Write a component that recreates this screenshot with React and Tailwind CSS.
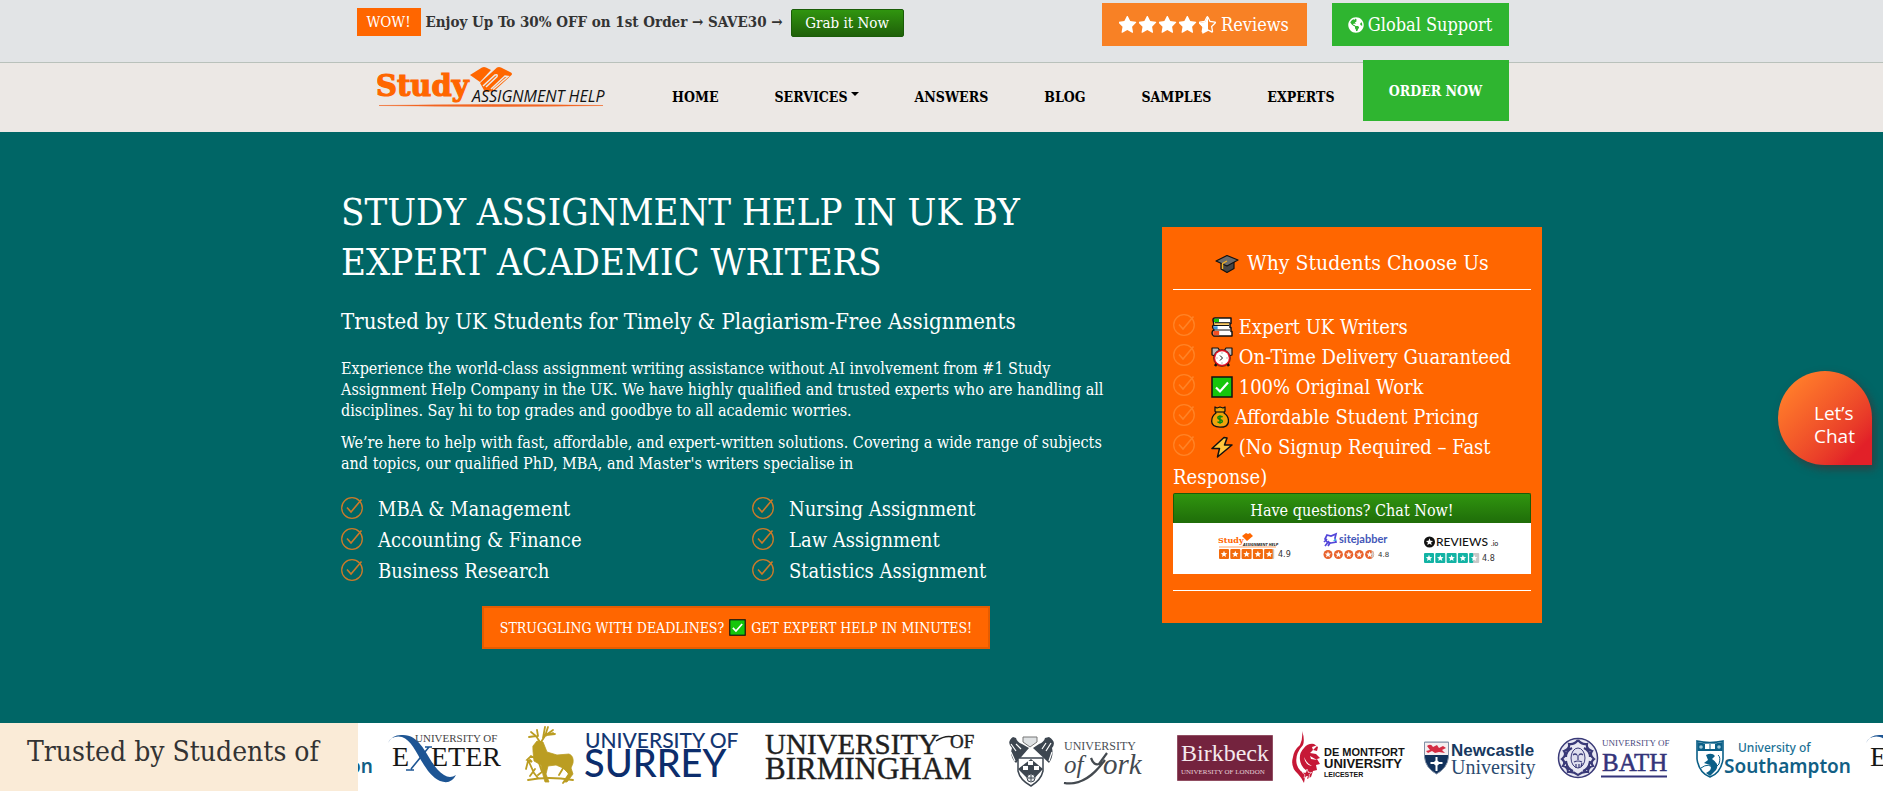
import React from "react";
import { FaGlobeAmericas } from "react-icons/fa";

const STAR_PATH =
  "M1664 647q0 22-26 48l-363 354 86 500q1 7 1 20 0 21-10.5 35.5t-30.5 14.5q-19 0-40-12l-449-236-449 236q-22 12-40 12-21 0-31.5-14.5t-10.5-35.5q0-6 2-20l86-500-364-354q-25-27-25-48 0-37 56-46l502-73 225-455q19-41 49-41t49 41l225 455 502 73q56 9 56 46z";
const STAR_POINTS = "0,-5 1.3,-1.6 4.8,-1.5 2.1,0.7 3,4.1 0,2.2 -3,4.1 -2.1,0.7 -4.8,-1.5 -1.3,-1.6";

function Star({ half = false }) {
  return (
    <svg viewBox="60 60 1672 1672" className="size-[18px]" aria-hidden="true">
      {half ? (
        <>
          <path d={STAR_PATH} fill="none" stroke="#fff" strokeWidth="130" transform="translate(90 90) scale(.9)" />
          <path d="M896 128q-30 0-49 41L622 624l-502 73q-56 9-56 46 0 21 25 48l364 354-86 500q0 60 42 56 18 0 40-12l447-235z" fill="#fff" />
        </>
      ) : (
        <path d={STAR_PATH} fill="#fff" />
      )}
    </svg>
  );
}

function BrandMark({ className }) {
  return (
    <svg viewBox="0 0 232 44" className={className} role="img" aria-label="Study Assignment Help">
      <text x="-1" y="31" fontFamily="'DejaVu Serif'" fontWeight="700" fontSize="29" fill="#ff6600" stroke="#ff6600" strokeWidth="1.2">Study</text>
      <path d="M93 10 105 2.500q2-1 4 0l5 2.500-11 12z" fill="#ff6600" />
      <path d="M103 18 120 2.500q2-1 4 0l10 5q2 1.500 0 3L117 26l-9 1z" fill="#ff6600" />
      <path d="m106 21 12-11q3-1 2 1.500L109 22M114 24l14-13 3 .500-15 13" fill="none" stroke="#ece8e5" strokeWidth="1.500" />
      <text x="95" y="37" fontFamily="'Open Sans',sans-serif" fontStyle="italic" fontSize="16" fontWeight="500" fill="#111">ASSIGNMENT HELP</text>
      <path d="M2 40.500q113-2 224 0-111 2-224 0" fill="#f26522" stroke="#f26522" strokeWidth=".5" />
    </svg>
  );
}

function CheckCircle({ className, color = "#cc7a29" }) {
  return (
    <svg viewBox="0 0 22 22" className={className} fill="none" stroke={color} strokeWidth="1.3" aria-hidden="true">
      <circle cx="11" cy="11" r="10.300" />
      <path d="m6 10.500 4 4.500L20.500 2.500" strokeWidth="1.600" />
    </svg>
  );
}

const emojiClass = "inline-block h-[22px] w-[22px] align-[-4px]";

const Cap = ({ className }) => (
  <svg viewBox="0 0 24 20" className={className} stroke="#111" strokeWidth="1.200" strokeLinejoin="round" aria-hidden="true">
    <path d="M6 8v7l6 3.500 7-4V8z" fill="#454545" />
    <path d="M1 7 12 1.500 23 6l-11 6z" fill="#6b6b6b" />
    <path d="m12 7-4.500 2.500V15" fill="none" stroke="#f5b325" strokeWidth="1.400" />
  </svg>
);
const Books = () => (
  <svg viewBox="0 0 22 22" className={emojiClass} strokeLinejoin="round" aria-hidden="true">
    <path d="M2 4q0-2 2-2h16v5.500h-1v4h1v4h1V20H3q-2-1-2-3t2-3l-1-2q-1-2 1-3.500z" fill="#fff" stroke="#111" strokeWidth="1.500" />
    <path d="M3 2.800h5v3.400H3z" fill="#16c60c" />
    <path d="M3 7.200h15v1.500H3z" fill="#f7b82e" />
    <path d="M2.600 10.300h4v3h-4z" fill="#3a96dd" />
    <path d="M2.200 15h6v4.300h-6z" fill="#f25022" />
    <path d="M4 6.700h15M3 9.500h15M3 14h16" stroke="#111" strokeWidth="1" />
  </svg>
);
const Clock = () => (
  <svg viewBox="0 0 22 22" className={emojiClass} aria-hidden="true">
    <path d="m4 20 3-4m11 4-3-4" stroke="#111" strokeWidth="2.600" />
    <path d="M1 2h6l2 3-5 5-3-1zM21 2h-6l-2 3 5 5 3-1z" fill="#bbb" stroke="#111" strokeWidth="1.200" strokeLinejoin="round" />
    <circle cx="11" cy="12" r="8.500" fill="#e81224" stroke="#111" strokeWidth=".5" />
    <circle cx="11" cy="12" r="6.800" fill="#fff" />
    <path d="m9 9.500 2.500 2.500L9 14.500" fill="none" stroke="#111" strokeWidth="1" />
    <path d="M11 6.500v1m0 9v1M5.500 12h1m9 0h1" stroke="#777" />
  </svg>
);
const CheckBox = ({ className = emojiClass }) => (
  <svg viewBox="0 0 22 22" className={className} aria-hidden="true">
    <rect x="1" y="1" width="20" height="20" fill="#16c60c" stroke="#111" strokeWidth="1.500" />
    <path d="m5 11.500 4 4L17 6.500" fill="none" stroke="#fff" strokeWidth="2.200" />
  </svg>
);
const Money = () => (
  <svg viewBox="0 0 18 22" className="inline-block h-[22px] w-[18px] align-[-4px]" aria-hidden="true">
    <path d="m4 1 2 1 3-1 3 1 2-1v4l-1 2c3 2 4.500 5 4.500 8 0 4-3 6.200-8.500 6.200S.500 19 .700 15c0-3 1.300-6 4.300-8L4 5z" fill="#f0a30a" stroke="#111" strokeWidth="1.300" strokeLinejoin="round" />
    <path d="M5 6h8" stroke="#111" strokeWidth="1.200" />
    <path d="M11.500 11.200c-1-1.400-4.800-1.200-4.600.8.100 1.800 4.500 1 4.500 3.200 0 1.800-3.700 2-4.900.4M9 9.300v8.400" fill="none" stroke="#0a8a0a" strokeWidth="1.500" />
  </svg>
);
const Bolt = () => (
  <svg viewBox="0 0 22 22" className={emojiClass} aria-hidden="true">
    <path d="m13 1.500-12 11h7.500L6.500 21 21 9h-7.500l2.500-7z" fill="#ffc83d" stroke="#111" strokeWidth="1.500" strokeLinejoin="round" />
  </svg>
);

const NAV = ["HOME", "SERVICES", "ANSWERS", "BLOG", "SAMPLES", "EXPERTS"];

const SUBJECTS = [
  ["MBA & Management", "Nursing Assignment"],
  ["Accounting & Finance", "Law Assignment"],
  ["Business Research", "Statistics Assignment"],
];

const REASONS = [
  { Icon: Books, text: "Expert UK Writers" },
  { Icon: Clock, text: "On-Time Delivery Guaranteed" },
  { Icon: CheckBox, text: "100% Original Work" },
  { Icon: Money, text: "Affordable Student Pricing" },
  { Icon: Bolt, text: "(No Signup Required – Fast Response)" },
];

function SquareStars({ y, color, partial }) {
  return [0, 1, 2, 3, 4].map((i) => (
    <g key={i} transform={`translate(${i * 11.300} ${y})`}>
      <rect width="10" height="10" rx="1" fill={i === 4 ? "#c8c8c8" : color} />
      {i === 4 && <rect width={partial} height="10" rx="1" fill={color} />}
      <polygon points={STAR_POINTS} transform="translate(5 5.200) scale(.68)" fill="#fff" />
    </g>
  ));
}

function Ratings() {
  return (
    <div className="flex h-[51px] items-start gap-[27px] bg-white pl-[45px] pt-2">
      <svg viewBox="0 0 78 36" className="h-9 w-[78px] shrink-0" role="img" aria-label="Study Assignment Help 4.9">
        <text x="0" y="12" fontFamily="'DejaVu Serif'" fontWeight="700" fontSize="8" fill="#f60">Study</text>
        <path d="m24 5 4-3 2 1 2-1 3 3-6 5z" fill="#f60" />
        <text x="25" y="15" fontFamily="'Open Sans',sans-serif" fontStyle="italic" fontWeight="700" fontSize="4" fill="#111">ASSIGNMENT HELP</text>
        <path d="M1 16h57" stroke="#f60" strokeWidth=".6" />
        <g transform="translate(1 0)"><SquareStars y={18} color="#f26a0c" partial={8.5} /></g>
        <text x="60" y="26" fontFamily="'DejaVu Sans'" fontSize="8" fill="#333">4.9</text>
      </svg>
      <svg viewBox="0 0 74 36" className="h-9 w-[74px] shrink-0" role="img" aria-label="sitejabber 4.8">
        <path d="m4 4 4 1 5-2-1 4 1 4-5 1-4-1-2-3zM1 11l3-3m-2 7 4-5m-1 5 2-3" fill="none" stroke="#5346d9" strokeWidth="1.700" />
        <path d="M10 10h3V7z" fill="#38b6e6" />
        <text x="16" y="12" fontFamily="'Lato',sans-serif" fontWeight="700" fontSize="11" fill="#4457b8">sitejabber</text>
        {[0, 1, 2, 3, 4].map((i) => (
          <g key={i} transform={`translate(${5 + i * 10.400} 23.500)`}>
            <circle r="4.500" fill="#e8622c" />
            {i === 4 && <path d="M2-4a4.500 4.500 0 0 1 0 8z" fill="#ccc" />}
            <polygon points={STAR_POINTS} transform="scale(.65)" fill="#fff" />
          </g>
        ))}
        <text x="55" y="26" fontFamily="'DejaVu Sans'" fontSize="7" fill="#333">4.8</text>
      </svg>
      <svg viewBox="0 0 80 36" className="h-9 w-20 shrink-0" role="img" aria-label="Reviews.io 4.8">
        <circle cx="5.500" cy="11" r="5.500" fill="#111" />
        <polygon points={STAR_POINTS} transform="translate(5.500 11) scale(.75)" fill="#fff" />
        <text x="12" y="15" fontFamily="'Lato',sans-serif" fontWeight="500" fontSize="12" fill="#111">REVIEWS</text>
        <text x="67" y="15" fontFamily="'Lato',sans-serif" fontSize="7" fill="#111">.io</text>
        <SquareStars y={22} color="#12b3a4" partial={4} />
        <text x="58" y="30" fontFamily="'DejaVu Sans'" fontSize="8" fill="#333">4.8</text>
      </svg>
    </div>
  );
}

const serif = "'Liberation Serif',serif";
const sans = "'Liberation Sans',sans-serif";
const logoClass = "h-[68px] shrink-0";

const Southampton = () => (
  <svg viewBox="0 0 176 68" className={`${logoClass} w-[176px]`} role="img" aria-label="University of Southampton">
    <path d="M15 18q13 3 26 0v18q-2 14-13 18-11-4-13-18z" fill="#fff" stroke="#0b5f87" strokeWidth="1.600" />
    <path d="M15.500 19q12.500 3 25 0v9h-25z" fill="#0b5f87" />
    <path d="M23 21h4.500v5H23zM28.500 21H33v5h-4.500z" fill="#fff" />
    <circle cx="19" cy="24" r="1.800" fill="#9cc6d8" /><circle cx="37" cy="24" r="1.800" fill="#9cc6d8" />
    <path d="M24 32q6-3 9 1l-3 3q8 5 4 11l-6 6-4-3q7-3 4-8l-6-2 4-3z" fill="#0b5f87" />
    <path d="M36 32q3 2 1 9l-4 4M19 45q8-6 13 1" fill="none" stroke="#0b5f87" />
    <text x="56" y="29" fontFamily="'Noto Sans',sans-serif" fontWeight="500" fontSize="12" fill="#1b7195">University of</text>
    <text x="42" y="50" fontFamily="'Noto Sans',sans-serif" fontWeight="600" fontSize="19" fill="#125f85">Southampton</text>
  </svg>
);
const Exeter = () => (
  <svg viewBox="0 0 135 68" className={`${logoClass} w-[135px]`} role="img" aria-label="University of Exeter">
    <text x="35" y="19" fontFamily={serif} fontSize="11" fill="#444">UNIVERSITY OF</text>
    <text x="12" y="43" fontFamily={serif} fontSize="28" fill="#161616">E</text>
    <text x="51" y="43" fontFamily={serif} fontSize="28" fill="#161616">ETER</text>
    <path d="M8 20q4-8 14-6c14 4 20 36 38 44q11 4 16-6-6 4-12 0C48 43 44 10 21 12q-9 0-13 8" fill="#1d5594" />
    <path d="M52 24h-7m4 0L31 46m-5 1h8" fill="none" stroke="#1d5594" strokeWidth="1.600" />
  </svg>
);
const Surrey = () => (
  <svg viewBox="0 0 238 68" className={`${logoClass} w-[238px]`} role="img" aria-label="University of Surrey">
    <g fill="#bb9d22" stroke="#bb9d22" strokeLinecap="round">
      <path d="m18 23 4-5 6 1 4 10 10 3 12-1q5 2 4 9l-2 5 2 6-6 8h-3l5-8-6-6-7-3-8 1-2 8 3 8h-4l-2-7-2-10-7-4-1-10z" strokeWidth=".8" />
      <path d="m25 19-4-6-5-4m5 4-7 1m9-1-1-6m4 12 4-6 8-3m-8 3 3-9m-5 11 2-11m1 8 7-5m-7 5 9-1M25 38l-9-5-4 4 5 2-2-2M13 38l-2 8m13-6 3 9-4 3m-9-13 5 11 4 5m-3-9-5 7m35-11-6 10m6-9 4 8-6 9M13 57q20-4 45 0" fill="none" strokeWidth="1.800" />
    </g>
    <text x="70" y="25" fontFamily="'Lato',sans-serif" fontSize="21" fontWeight="500" fill="#143772">UNIVERSITY OF</text>
    <text x="69" y="54" fontFamily="'Lato',sans-serif" fontSize="38" fontWeight="500" fill="#0c2d6c">SURREY</text>
  </svg>
);
const Birmingham = () => (
  <svg viewBox="0 0 240 68" className={`${logoClass} w-[240px]`} role="img" aria-label="University of Birmingham" fontFamily={serif} fill="#1f1f1f" stroke="#1f1f1f" strokeWidth=".4">
    <text x="12" y="31" fontSize="29">UNIVERSITY</text>
    <path d="M183 18q9-6 17-4" fill="none" strokeWidth="1.500" />
    <text x="197" y="25" fontSize="19">OF</text>
    <text x="12" y="56" fontSize="31">BIRMINGHAM</text>
  </svg>
);
const York = () => (
  <svg viewBox="0 0 167 68" className={`${logoClass} w-[167px]`} role="img" aria-label="University of York">
    <path d="M20 14q-7 5-1 11-3 8 4 15l13-15-7-4q-5-2-6-6zM56 14q8 5 3 11 2 8-3 15L40 25l6-4q5-2 6-6z" fill="#3d4650" />
    <path d="M23 28 18 21m10 5-5-5m30 7 5-8m-9 6 4-6M22 38l-4-9m38 9 3-9" stroke="#fff" strokeWidth="1.200" />
    <path d="M30 14h14v5l-7 5-7-5z" fill="#dfe2e4" stroke="#777" />
    <path d="M25 35h25v13q-2 9-12 15-11-6-13-15z" fill="#fff" stroke="#3d4650" strokeWidth="1.500" />
    <path d="m25 46 13-10 12 10-12 13z" fill="#3d4650" />
    <path d="M30 43h5v4h-5zM41 43h5v4h-5zM35 38h5v4h-5z" fill="#fff" />
    <circle cx="38" cy="55" r="4" fill="#e5e7e9" stroke="#3d4650" /><path d="M38 52v6m-3-3h6" stroke="#3d4650" />
    <text x="71" y="27" fontFamily={serif} fontSize="12" fill="#4a4f55">UNIVERSITY</text>
    <text x="71" y="50" fontFamily={serif} fontStyle="italic" fontSize="25" fill="#444a50">of</text>
    <path d="M98 35q3 8 8 6l8-11M110 39q-16 24-39 21 21 4 41-23" fill="none" stroke="#444a50" strokeWidth="2.200" />
    <text x="110" y="51" fontFamily={serif} fontStyle="italic" fontSize="29" fill="#444a50">ork</text>
  </svg>
);
const Birkbeck = () => (
  <svg viewBox="0 0 122 68" className={`${logoClass} w-[122px]`} role="img" aria-label="Birkbeck University of London">
    <path d="M17.500 12.500h95v45h-95z" fill="#74233e" stroke="#914e62" />
    <text x="21" y="38" fontFamily={serif} fontSize="24" fill="#f4e9ed">Birkbeck</text>
    <text x="21" y="51" fontFamily={serif} fontSize="7" fill="#e6d0d7">UNIVERSITY OF LONDON</text>
  </svg>
);
const DeMontfort = () => (
  <svg viewBox="0 0 131 68" className={`${logoClass} w-[131px]`} role="img" aria-label="De Montfort University Leicester">
    <g fill="#c61836">
      <path d="M20 8q3 8 1 14-9 10-6 20 2 7 10 9-3 4-3 9-3-6-6-9Q8 44 11 34q1-7 7-12 3-6 2-14" />
      <path d="M22 25q4-5 10-4l4 3-1 4-4-1-3 3 6 1 4 4-3 1 3 5-4 1 1 5-4 1-2 6-4 2 2-7q-8-4-9-12-1-7 4-12" />
      <path d="m30 24 6-2-5 5zM22 34q3 7 8 9-7-1-8-9m6-1 7 4-6-1z" fill="#fff" />
      <polygon points={STAR_POINTS} transform="translate(25 51)" stroke="#fff" strokeWidth=".6" />
    </g>
    <g fontFamily={sans} fontWeight="700" fill="#141414">
      <text x="42" y="33" fontSize="11">DE MONTFORT</text>
      <text x="42" y="45" fontSize="13">UNIVERSITY</text>
      <text x="42" y="54" fontSize="7">LEICESTER</text>
    </g>
  </svg>
);
const Newcastle = () => (
  <svg viewBox="0 0 135 68" className={`${logoClass} w-[135px]`} role="img" aria-label="Newcastle University">
    <path d="M11.500 19h24v15q-1 11-12 17-11-6-12-17z" fill="#12325c" stroke="#8391a6" />
    <path d="M12 19.500h23V32H12z" fill="#f5eef0" />
    <path d="M14 23q4-3 6 1l4-2 2 3 4-2 3 2-4 2 3 3-6-1-4 1-3-2-4 2-2-2 4-1z" fill="#d42c43" />
    <path d="M23.500 34v14m-6-8h12" stroke="#fff" strokeWidth="2" /><circle cx="23.500" cy="40" r="2.500" fill="#fff" />
    <text x="38" y="33" fontFamily={sans} fontWeight="700" fontSize="17" fill="#173960">Newcastle</text>
    <text x="38" y="51" fontFamily={serif} fontSize="20" fill="#294a70">University</text>
  </svg>
);
const Bath = () => (
  <svg viewBox="0 0 134 68" className={`${logoClass} w-[134px]`} role="img" aria-label="University of Bath">
    <circle cx="30" cy="35" r="19.500" fill="#e9e9f3" stroke="#3a3a78" strokeWidth="1.500" />
    <path d="M30 17q-4 5-9 4 1 5-5 7 3 4-2 8 4 3 1 7 5 1 5 6 5-1 10 3 5-4 10-3 0-5 5-6-3-4 1-7-5-4-2-8-6-2-5-7-5 1-9-4m-6 8q-6 3-6 9m18-9q6 3 6 9m-24 4q1 8 7 10m17-10q-1 8-7 10" fill="none" stroke="#3a3a78" strokeWidth="2.200" />
    <ellipse cx="30" cy="35" rx="7" ry="10" fill="#dfdfee" stroke="#3a3a78" />
    <path d="M25 32q2-2 4 0m2 0q2-2 4 0m-5 0v5m-4 2q4-2 8 0m-6 2v4m3-4v4m3-5-1 4" fill="none" stroke="#3a3a78" strokeWidth="1.200" />
    <text x="54" y="23" fontFamily={serif} fontSize="9" fill="#4a4a80">UNIVERSITY OF</text>
    <text x="54" y="48" fontFamily={serif} fontSize="25" fill="#34347a" stroke="#34347a" strokeWidth=".5">BATH</text>
    <path d="M53 53.500h66" stroke="#34347a" strokeWidth="2" />
  </svg>
);

const TICKER = [Southampton, Exeter, Surrey, Birmingham, York, Birkbeck, DeMontfort, Newcastle, Bath, Southampton, Exeter];

export default function App() {
  return (
    <div className="relative min-h-screen overflow-x-hidden bg-white font-['DejaVu_Serif_Condensed','DejaVu_Serif',serif] text-base text-white">
      <div className="h-[63px] border-b border-[#b9c1bb] bg-[#e2e4e6]">
        <div className="mx-auto flex max-w-[1170px] items-start justify-between pr-[18px]">
          <div className="flex items-start pt-2 text-[#333]">
            <span className="flex h-7 w-16 items-center justify-center bg-[#ff6600] text-[15px] text-white">WOW!</span>
            <span className="ml-[5px] mr-2 text-[15px] font-bold leading-7">Enjoy Up To 30% OFF on 1st Order → SAVE30 →</span>
            <button className="mt-px h-7 w-[113px] rounded-[2px] border border-[#1a5c08] bg-gradient-to-b from-[#30950f] to-[#1f6009] text-[15px] text-white">Grab it Now</button>
          </div>
          <div className="flex gap-[25px] pt-[3px] text-lg">
            <a href="#reviews" className="flex h-[43px] w-[205px] items-center justify-center gap-[2px] bg-[#f88125]">
              <Star /><Star /><Star /><Star /><Star half />
              <span className="ml-[2px]">Reviews</span>
            </a>
            <a href="#support" className="flex h-[43px] w-[177px] items-center justify-center gap-1 bg-[#2fb530]">
              <FaGlobeAmericas className="size-4" />Global Support
            </a>
          </div>
        </div>
      </div>

      <header className="h-[69px] bg-[#ece8e5]">
        <div className="mx-auto flex max-w-[1170px] items-start justify-between pl-5 pr-[18px]">
          <a href="#home" className="mt-[2px]"><BrandMark className="h-11 w-[232px]" /></a>
          <nav className="flex items-start text-sm font-bold text-black">
            {NAV.map((label) => (
              <a key={label} href={`#${label.toLowerCase()}`} className="flex items-center px-7 pt-6">
                {label}
                {label === "SERVICES" && <span className="mb-[6px] ml-[3px] border-x-4 border-t-4 border-x-transparent border-t-black" />}
              </a>
            ))}
            <a href="#order" className="-mt-[3px] flex h-[61px] w-[146px] items-center justify-center bg-[#2fb530] text-white">ORDER NOW</a>
          </nav>
        </div>
      </header>

      <main className="bg-[#006666]">
        <div className="mx-auto flex min-h-[591px] max-w-[1201px] items-start gap-10">
          <section className="min-w-0 flex-1 pt-[55px]">
            <h1 className="text-[38px] leading-[50px]">STUDY ASSIGNMENT HELP IN UK BY<br />EXPERT ACADEMIC WRITERS</h1>
            <h2 className="mt-5 text-[22px] leading-[30px]">Trusted by UK Students for Timely &amp; Plagiarism-Free Assignments</h2>
            <p className="mt-[21px] whitespace-nowrap text-base leading-[21px]">Experience the world-class assignment writing assistance without AI involvement from #1 Study<br />Assignment Help Company in the UK. We have highly qualified and trusted experts who are handling all<br />disciplines. Say hi to top grades and goodbye to all academic worries.</p>
            <p className="mt-[11px] whitespace-nowrap text-base leading-[21px]">We’re here to help with fast, affordable, and expert-written solutions. Covering a wide range of subjects<br />and topics, our qualified PhD, MBA, and Master's writers specialise in</p>
            <ul className="mt-5 flex flex-col gap-px text-xl leading-[30px]">
              {SUBJECTS.map((row) => (
                <li key={row[0]} className="grid grid-cols-[411px_1fr]">
                  {row.map((s) => (
                    <span key={s} className="flex gap-[15px]"><CheckCircle className="mt-[3px] size-[22px] shrink-0" />{s}</span>
                  ))}
                </li>
              ))}
            </ul>
            <a href="#help" className="ml-[141px] mt-5 flex h-[43px] w-[508px] items-center justify-center gap-[5px] whitespace-nowrap border-2 border-[#e65c00] bg-[#ff6600] text-sm">
              STRUGGLING WITH DEADLINES? <CheckBox className="size-[17px]" /> GET EXPERT HELP IN MINUTES!
            </a>
          </section>

          <aside className="mt-[95px] h-[396px] w-[380px] shrink-0 bg-[#ff6600] px-[11px]">
            <h3 className="flex h-[63px] items-center justify-center gap-2 border-b border-white pt-3 text-[21px]">
              <Cap className="h-5 w-6" />Why Students Choose Us
            </h3>
            <ul className="mt-[22px] text-xl leading-[30px]">
              {REASONS.map(({ Icon, text }) => (
                <li key={text}>
                  <CheckCircle className="mr-4 inline-block size-[22px] align-[-2px]" color="#ff8326" />
                  <Icon /> {text}
                </li>
              ))}
            </ul>
            <button className="mt-px block h-[30px] w-full rounded-t-[2px] border border-b-0 border-[#1a5c08] bg-gradient-to-b from-[#30950f] to-[#1f6d09] pt-1 text-base leading-6">Have questions? Chat Now!</button>
            <Ratings />
            <div className="mt-4 border-t border-white" />
          </aside>
        </div>
      </main>

      <section className="flex h-[68px] overflow-hidden">
        <h2 className="w-[358px] shrink-0 bg-[#faebd7] pl-[27px] pt-3 text-[28px] leading-[34px] text-[#333]">Trusted by Students of</h2>
        <div className="flex min-w-0 flex-1 overflow-hidden">
          <div className="-ml-[154px] flex shrink-0">
            {TICKER.map((Logo, i) => <Logo key={i} />)}
          </div>
        </div>
      </section>

      <button className="absolute right-[11px] top-[371px] size-[94px] rounded-full rounded-br-none bg-gradient-to-br from-[#ff7a2a] from-15% to-[#e22028] to-85% pl-[36px] pt-[14px] text-left font-['Open_Sans',sans-serif] text-[19px] leading-[23px] shadow-[3px_4px_8px_rgba(80,40,40,0.6)]">
        Let’s<br />Chat
      </button>
    </div>
  );
}
